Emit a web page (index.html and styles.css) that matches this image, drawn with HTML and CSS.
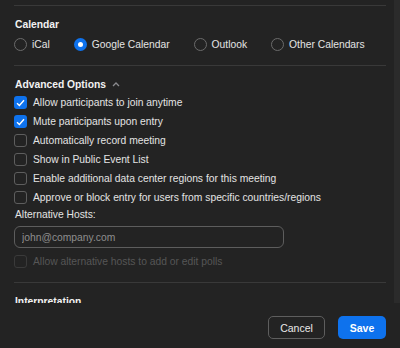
FILE: index.html
```html
<!DOCTYPE html>
<html lang="en">
<head>
    <meta charset="UTF-8">
    <meta name="viewport" content="width=device-width, initial-scale=1.0">
    <title>Meeting Options</title>
    <link rel="stylesheet" href="styles.css">
</head>
<body>
    <div class="panel">
        <div class="scroll">
            <div class="content">
                <div class="divider first"></div>

                <h3 class="section-title">Calendar</h3>
                <div class="radio-row">
                    <label class="radio"><span class="radio-dot"></span>iCal</label>
                    <label class="radio"><span class="radio-dot checked"></span>Google Calendar</label>
                    <label class="radio"><span class="radio-dot"></span>Outlook</label>
                    <label class="radio"><span class="radio-dot"></span>Other Calendars</label>
                </div>

                <div class="divider"></div>

                <h3 class="section-title">Advanced Options
                    <svg class="chevron" width="8" height="5" viewBox="0 0 8 5"><path d="M1 4 L4 1 L7 4" fill="none" stroke="#8a8a8e" stroke-width="1.3"/></svg>
                </h3>
                <label class="check-row"><span class="box checked"><svg width="9" height="8" viewBox="0 0 9 8"><path d="M1 4.2 L3.4 6.5 L8 1.2" fill="none" stroke="#fff" stroke-width="1.4"/></svg></span>Allow participants to join anytime</label>
                <label class="check-row"><span class="box checked"><svg width="9" height="8" viewBox="0 0 9 8"><path d="M1 4.2 L3.4 6.5 L8 1.2" fill="none" stroke="#fff" stroke-width="1.4"/></svg></span>Mute participants upon entry</label>
                <label class="check-row"><span class="box"></span>Automatically record meeting</label>
                <label class="check-row"><span class="box"></span>Show in Public Event List</label>
                <label class="check-row"><span class="box"></span>Enable additional data center regions for this meeting</label>
                <label class="check-row"><span class="box"></span>Approve or block entry for users from specific countries/regions</label>

                <div class="field-label">Alternative Hosts:</div>
                <input type="text" class="text-input" placeholder="john@company.com">
                <label class="check-row disabled"><span class="box"></span>Allow alternative hosts to add or edit polls</label>

                <div class="divider"></div>

                <h3 class="section-title">Interpretation</h3>
            </div>
            <div class="scrollbar"></div>
        </div>
        <div class="footer">
            <button class="btn btn-secondary">Cancel</button>
            <button class="btn btn-primary">Save</button>
        </div>
    </div>
</body>
</html>
```

FILE: styles.css
```css
* {
    margin: 0;
    padding: 0;
    box-sizing: border-box;
}

body {
    font-family: "Liberation Sans", Helvetica, Arial, sans-serif;
    font-size: 10.3px;
    background-color: #232323;
    color: #e4e4e4;
    width: 400px;
    height: 348px;
    overflow: hidden;
}

.panel {
    display: flex;
    flex-direction: column;
    height: 348px;
}

/* Area con scroll */
.scroll {
    display: flex;
    height: 303px;
    overflow: hidden;
}

.content {
    flex: 1;
    padding: 0 8px 0 14px;
}

.scrollbar {
    width: 6px;
    background-color: #2b2b2b;
}

.divider {
    height: 1px;
    background-color: #393939;
    margin-top: 11px;
}

.divider.first {
    margin-top: 5px;
}

.section-title {
    font-size: 10.3px;
    font-weight: 700;
    color: #f2f2f2;
    height: 17px;
    line-height: 17px;
    margin-top: 10px;
    padding-left: 1px;
    display: flex;
    align-items: center;
    gap: 6px;
}

.chevron {
    margin-top: -1px;
}

/* Radios */
.radio-row {
    display: flex;
    gap: 24px;
    height: 20px;
    margin-top: 1px;
    align-items: center;
}

.radio {
    display: flex;
    align-items: center;
    gap: 5px;
}

.radio-dot {
    width: 13px;
    height: 13px;
    border-radius: 50%;
    border: 1px solid #6b6b6b;
}

.radio-dot.checked {
    border: none;
    background-color: #0e72ed;
    display: flex;
    align-items: center;
    justify-content: center;
}

.radio-dot.checked::after {
    content: "";
    width: 5px;
    height: 5px;
    border-radius: 50%;
    background-color: #fff;
}

/* Checkboxes */
.check-row {
    display: flex;
    align-items: center;
    gap: 6px;
    height: 19px;
}

.box {
    width: 13px;
    height: 13px;
    border: 1px solid #5e5e5e;
    border-radius: 3px;
    display: flex;
    align-items: center;
    justify-content: center;
}

.box.checked {
    border: none;
    background-color: #0e72ed;
}

.check-row.disabled {
    color: #565656;
    margin-top: 4px;
}

.check-row.disabled .box {
    border-color: #3a3a3a;
}

.field-label {
    height: 16px;
    line-height: 16px;
    padding-left: 1px;
    color: #e4e4e4;
}

.text-input {
    display: block;
    width: 270px;
    height: 22px;
    margin-top: 3px;
    padding: 0 7px;
    font-family: inherit;
    font-size: 10.3px;
    color: #e4e4e4;
    background-color: #232323;
    border: 1px solid #5d5d5d;
    border-radius: 6px;
    outline: none;
}

.text-input::placeholder {
    color: #8e8e8e;
}

/* Footer */
.footer {
    display: flex;
    justify-content: flex-end;
    gap: 13px;
    padding: 13px 14px 0 0;
}

.btn {
    height: 23px;
    border-radius: 5px;
    font-family: inherit;
    font-size: 10.5px;
    cursor: pointer;
}

.btn-secondary {
    width: 57px;
    background-color: transparent;
    border: 1px solid #5e5e5e;
    color: #e8e8e8;
}

.btn-primary {
    width: 48px;
    background-color: #0e72ed;
    border: none;
    color: #fff;
    font-weight: 700;
}
```
